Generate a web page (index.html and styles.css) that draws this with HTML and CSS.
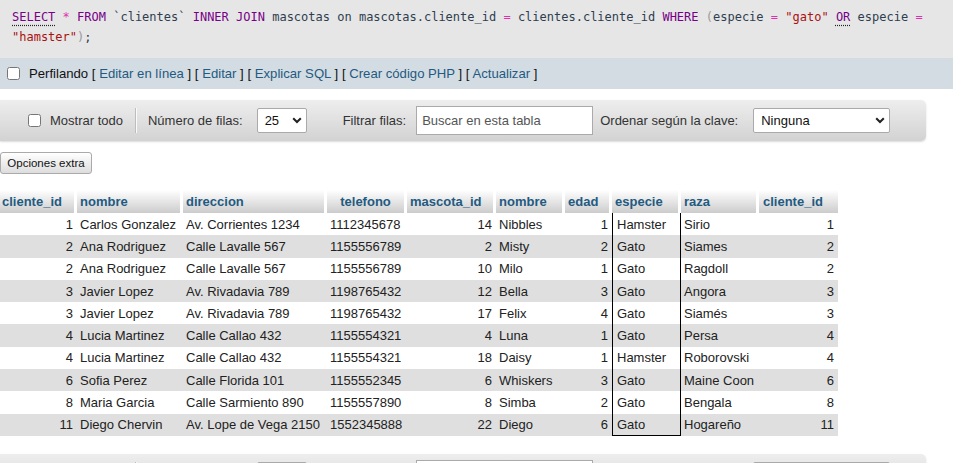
FILE: index.html
```html
<!DOCTYPE html>
<html lang="es">
<head>
<meta charset="utf-8">
<title>SQL result</title>
<link rel="stylesheet" href="styles.css">
</head>
<body>
<div class="sql-box"><span class="kw dotted">SELECT</span> <span class="op">*</span> <span class="kw">FROM</span> <span class="id">`clientes`</span> <span class="kw">INNER</span> <span class="kw">JOIN</span> <span class="id">mascotas</span> <span class="id">on</span> <span class="id">mascotas.cliente_id</span> <span class="op">=</span> <span class="id">clientes.cliente_id</span> <span class="kw">WHERE</span> <span class="pn">(</span><span class="id">especie</span> <span class="op">=</span> <span class="str">"gato"</span> <span class="kw dotted">OR</span> <span class="id">especie</span> <span class="op">=</span> <span class="str">"hamster"</span><span class="pn">)</span><span class="id">;</span></div>

<div class="profile-bar">
  <input type="checkbox" class="cb">
  <span class="profile-text">Perfilando [ <a href="#">Editar en línea</a> ] [ <a href="#">Editar</a> ] [ <a href="#">Explicar SQL</a> ] [ <a href="#">Crear código PHP</a> ] [ <a href="#">Actualizar</a> ]</span>
</div>

<div class="toolbar">
  <input type="checkbox" class="cb tb-cb">
  <span class="tb-label show-all">Mostrar todo</span>
  <span class="tb-sep"></span>
  <span class="tb-label rows-label">Número de filas:</span>
  <div class="fake-select sel-rows"><span>25</span><svg width="10" height="7" viewBox="0 0 10 7"><path d="M1.2 1.2 L5 5 L8.8 1.2" fill="none" stroke="#222" stroke-width="2"/></svg></div>
  <span class="tb-label filter-label">Filtrar filas:</span>
  <div class="fake-input">Buscar en esta tabla</div>
  <span class="tb-label order-label">Ordenar según la clave:</span>
  <div class="fake-select sel-order"><span>Ninguna</span><svg width="10" height="7" viewBox="0 0 10 7"><path d="M1.2 1.2 L5 5 L8.8 1.2" fill="none" stroke="#222" stroke-width="2"/></svg></div>
</div>

<button class="extra-btn">Opciones extra</button>

<table class="results">
  <colgroup>
    <col class="w77"><col class="w106"><col class="w144"><col class="w80"><col class="w89"><col class="w69"><col class="w47"><col class="w69"><col class="w78"><col class="w79">
  </colgroup>
  <thead>
    <tr>
      <th class="first">cliente_id</th><th>nombre</th><th>direccion</th><th class="center">telefono</th><th>mascota_id</th><th>nombre</th><th>edad</th><th>especie</th><th>raza</th><th class="last">cliente_id</th>
    </tr>
  </thead>
  <tbody>
    <tr><td class="num">1</td><td>Carlos Gonzalez</td><td>Av. Corrientes 1234</td><td>1112345678</td><td class="num">14</td><td>Nibbles</td><td class="num">1</td><td class="sp">Hamster</td><td>Sirio</td><td class="num">1</td></tr>
    <tr><td class="num">2</td><td>Ana Rodriguez</td><td>Calle Lavalle 567</td><td>1155556789</td><td class="num">2</td><td>Misty</td><td class="num">2</td><td class="sp">Gato</td><td>Siames</td><td class="num">2</td></tr>
    <tr><td class="num">2</td><td>Ana Rodriguez</td><td>Calle Lavalle 567</td><td>1155556789</td><td class="num">10</td><td>Milo</td><td class="num">1</td><td class="sp">Gato</td><td>Ragdoll</td><td class="num">2</td></tr>
    <tr><td class="num">3</td><td>Javier Lopez</td><td>Av. Rivadavia 789</td><td>1198765432</td><td class="num">12</td><td>Bella</td><td class="num">3</td><td class="sp">Gato</td><td>Angora</td><td class="num">3</td></tr>
    <tr><td class="num">3</td><td>Javier Lopez</td><td>Av. Rivadavia 789</td><td>1198765432</td><td class="num">17</td><td>Felix</td><td class="num">4</td><td class="sp">Gato</td><td>Siamés</td><td class="num">3</td></tr>
    <tr><td class="num">4</td><td>Lucia Martinez</td><td>Calle Callao 432</td><td>1155554321</td><td class="num">4</td><td>Luna</td><td class="num">1</td><td class="sp">Gato</td><td>Persa</td><td class="num">4</td></tr>
    <tr><td class="num">4</td><td>Lucia Martinez</td><td>Calle Callao 432</td><td>1155554321</td><td class="num">18</td><td>Daisy</td><td class="num">1</td><td class="sp">Hamster</td><td>Roborovski</td><td class="num">4</td></tr>
    <tr><td class="num">6</td><td>Sofia Perez</td><td>Calle Florida 101</td><td>1155552345</td><td class="num">6</td><td>Whiskers</td><td class="num">3</td><td class="sp">Gato</td><td>Maine Coon</td><td class="num">6</td></tr>
    <tr><td class="num">8</td><td>Maria Garcia</td><td>Calle Sarmiento 890</td><td>1155557890</td><td class="num">8</td><td>Simba</td><td class="num">2</td><td class="sp">Gato</td><td>Bengala</td><td class="num">8</td></tr>
    <tr><td class="num">11</td><td>Diego Chervin</td><td>Av. Lope de Vega 2150</td><td>1552345888</td><td class="num">22</td><td>Diego</td><td class="num">6</td><td class="sp">Gato</td><td>Hogareño</td><td class="num">11</td></tr>
  </tbody>
</table>

<div class="toolbar bottom">
  <input type="checkbox" class="cb tb-cb">
  <span class="tb-label show-all">Mostrar todo</span>
  <span class="tb-sep"></span>
  <span class="tb-label rows-label">Número de filas:</span>
  <div class="fake-select sel-rows"><span>25</span><svg width="10" height="7" viewBox="0 0 10 7"><path d="M1.2 1.2 L5 5 L8.8 1.2" fill="none" stroke="#222" stroke-width="2"/></svg></div>
  <span class="tb-label filter-label">Filtrar filas:</span>
  <div class="fake-input">Buscar en esta tabla</div>
  <span class="tb-label order-label">Ordenar según la clave:</span>
  <div class="fake-select sel-order"><span>Ninguna</span><svg width="10" height="7" viewBox="0 0 10 7"><path d="M1.2 1.2 L5 5 L8.8 1.2" fill="none" stroke="#222" stroke-width="2"/></svg></div>
</div>
</body>
</html>
```

FILE: styles.css
```css
html {
  overflow: hidden;
}
body {
  margin: 0;
  background: #fff;
  font-family: "Liberation Sans", Arial, sans-serif;
  font-size: 13px;
  color: #222;
}

/* SQL query box */
.sql-box {
  background: #e6e6e6;
  padding: 7px 12px 11px 12px;
  font-family: "DejaVu Sans Mono", monospace;
  font-size: 12px;
  line-height: 20px;
  color: #333;
  height: 40px;
}
.sql-box .kw { color: #770088; }
.sql-box .op { color: #e030b0; }
.sql-box .id { color: #2e3d50; }
.sql-box .str { color: #aa1111; }
.sql-box .pn { color: #999; }
.sql-box .dotted {
  text-decoration: underline dotted #222;
  text-underline-offset: 4px;
}

/* profiling bar */
.profile-bar {
  background: #d3dce3;
  height: 31px;
  display: flex;
  align-items: center;
  padding-left: 7px;
}
.cb {
  width: 13px;
  height: 13px;
  margin: 0;
}
.profile-text {
  margin-left: 9px;
  color: #111;
  font-size: 13.15px;
}
.profile-text a {
  color: #235a81;
  text-decoration: none;
}

/* toolbar */
.toolbar {
  margin-top: 11px;
  width: 926px;
  height: 41px;
  box-sizing: border-box;
  display: flex;
  align-items: center;
  padding-left: 28px;
  background: linear-gradient(#eeeeee, #d2d2d2);
  border-radius: 0 5px 5px 0;
  box-shadow: 0 1px 2px rgba(0, 0, 0, 0.15);
  color: #333;
}
.toolbar.bottom {
  margin-top: 18px;
}
.tb-label {
  white-space: nowrap;
}
.show-all { margin-left: 9px; }
.tb-sep {
  width: 1px;
  height: 25px;
  margin-left: 12px;
  background: #bdbdbd;
  box-shadow: 1px 0 0 #fafafa;
}
.rows-label { margin-left: 12px; }
.filter-label { margin-left: 36px; }
.order-label { margin-left: 7px; }

.fake-select {
  height: 25px;
  box-sizing: border-box;
  background: #fff;
  border: 1px solid #aaa;
  border-radius: 2px;
  display: flex;
  align-items: center;
  justify-content: space-between;
  padding: 0 4px 0 7px;
  color: #111;
}
.fake-select svg { display: block; }
.sel-rows {
  width: 50px;
  margin-left: 14px;
}
.sel-order {
  width: 137px;
  margin-left: 15px;
}
.fake-input {
  width: 177px;
  height: 29px;
  box-sizing: border-box;
  margin-left: 10px;
  background: #fff;
  border: 1px solid #aaa;
  display: flex;
  align-items: center;
  padding-left: 5px;
  color: #555;
}

/* extra options button */
.extra-btn {
  display: block;
  margin: 11px 0 0 0;
  width: 92px;
  height: 22px;
  padding: 0;
  font-family: "Liberation Sans", Arial, sans-serif;
  font-size: 11.5px;
  color: #111;
  background: linear-gradient(#ffffff, #dddddd);
  border: 1px solid #aaa;
  border-radius: 3px;
}

/* results table */
.results {
  margin-top: 16px;
  table-layout: fixed;
  width: 838px;
  border-collapse: separate;
  border-spacing: 0;
}
.w77 { width: 77px; }
.w106 { width: 106px; }
.w144 { width: 144px; }
.w80 { width: 80px; }
.w89 { width: 89px; }
.w69 { width: 69px; }
.w47 { width: 47px; }
.w78 { width: 78px; }
.w79 { width: 79px; }

.results th {
  height: 23px;
  box-sizing: border-box;
  padding: 0 3px;
  text-align: left;
  font-weight: bold;
  color: #235a81;
  background: linear-gradient(#ffffff, #cccccc);
  border-right: 3px solid #fff;
  white-space: nowrap;
  overflow: hidden;
}
.results th.first { padding-left: 2px; }
.results th.last { border-right: 0; padding-left: 4px; }
.results th.center { text-align: center; }

.results td {
  height: 22.3px;
  box-sizing: border-box;
  padding: 0 3px;
  white-space: nowrap;
  overflow: hidden;
  color: #222;
}
.results td.num {
  text-align: right;
  padding-right: 4px;
}
.results tbody tr:nth-child(even) td {
  background: #dfdfdf;
}
.results td.sp {
  border-left: 1px solid #000;
  border-right: 1px solid #000;
  padding-left: 4px;
}
.results tbody tr:last-child td.sp {
  border-bottom: 1px solid #000;
}
```
